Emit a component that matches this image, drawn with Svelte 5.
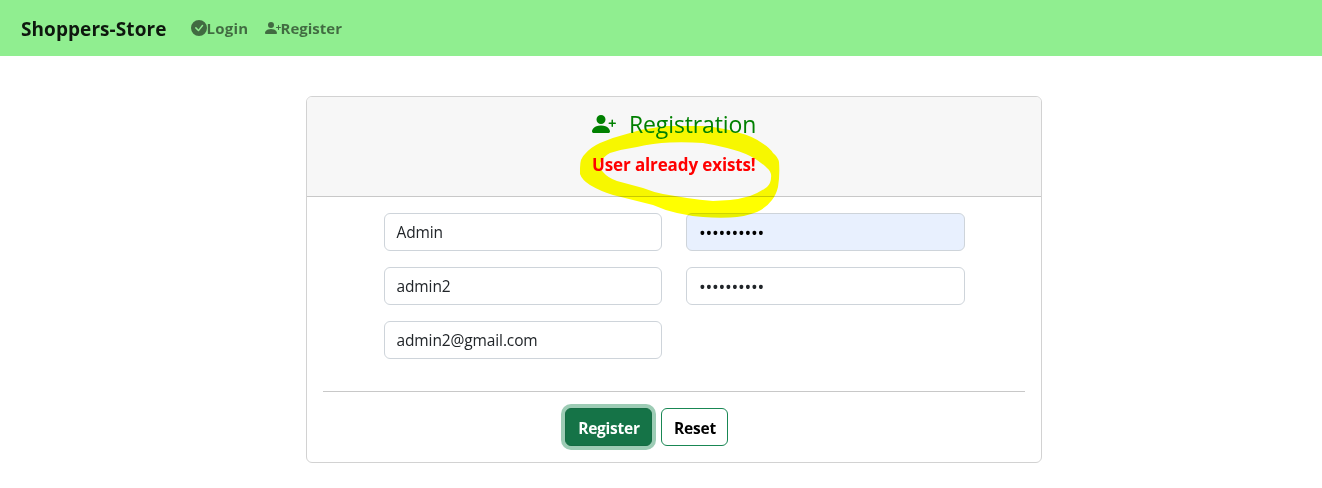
<script>
  const names = ['Admin', 'admin2', 'admin2@gmail.com'];
</script>

{#snippet personPlus(size)}
  <svg width={size} height={size} viewBox="0 0 16 16" fill="currentColor" aria-hidden="true">
    <path d="M1 14s-1 0-1-1 1-4 6-4 6 3 6 4-1 1-1 1H1zm5-6a3 3 0 1 0 0-6 3 3 0 0 0 0 6z" />
    <path fill-rule="evenodd" d="M13.5 5a.5.5 0 0 1 .5.5V7h1.5a.5.5 0 0 1 0 1H14v1.5a.5.5 0 0 1-1 0V8h-1.5a.5.5 0 0 1 0-1H13V5.5a.5.5 0 0 1 .5-.5z" />
  </svg>
{/snippet}

<nav>
  <span class="brand">Shoppers-Store</span>
  <span class="link login">
    <svg width="16" height="16" viewBox="0 0 16 16" fill="currentColor" aria-hidden="true">
      <path d="M16 8A8 8 0 1 1 0 8a8 8 0 0 1 16 0zm-3.97-3.03a.75.75 0 0 0-1.08.022L7.477 9.417 5.384 7.323a.75.75 0 0 0-1.06 1.06L6.97 11.03a.75.75 0 0 0 1.079-.02l3.992-4.99a.75.75 0 0 0-.01-1.05z" />
    </svg><span>Login</span>
  </span>
  <span class="link">{@render personPlus(16)}<span>Register</span></span>
</nav>

<main>
  <header>
    <h3>{@render personPlus(24)}<span>Registration</span></h3>
    <p class="error">User already exists!</p>
  </header>
  <section>
    <div class="fields">
      <div class="column">
        {#each names as value}
          <div class="field">{value}</div>
        {/each}
      </div>
      <div class="column">
        <div class="field dots filled">••••••••••</div>
        <div class="field dots">••••••••••</div>
      </div>
    </div>
    <hr />
    <div class="actions">
      <button class="primary">Register</button>
      <button class="outline">Reset</button>
    </div>
  </section>
  <svg class="marker" width="200" height="92" viewBox="580 126 200 92" aria-hidden="true">
    <path fill="#ff0" fill-rule="evenodd" d="M580 168Q580 158 585 154Q591 147 600 143Q614 137 630 133Q641 129 653 128Q667 125 680 126Q697 125 713 127Q728 129 740 133Q752 136 762 143Q770 148 773 153Q778 157 779 162Q780 175 778 187Q776 195 772 200Q766 208 757 212Q744 217 730 217.500Q716 218 703 217Q690 216 677 213Q664 210 653 205L613 195Q600 191 590 185Q582 180 580 174ZM600 163Q604 156 610 153Q623 149 637 147Q653 143 670 142.500Q687 142 703 143Q716 145 727 148Q740 151 750 156Q760 161 767 168Q772 172 771 178Q771 183 767 187Q759 193 750 196Q740 199 730 200L713 201Q700 200 687 198L663 194Q653 192 643 188L617 181Q608 178 603 172Q599 168 600 163Z" />
  </svg>
</main>

<style>
  :global(body) {
    background: #fff;
    color: #212529;
    font: 16px/24px "Open Sans", "Noto Sans", sans-serif;
  }
  nav {
    display: flex;
    align-items: center;
    box-sizing: border-box;
    height: 56px;
    padding: 1px 21px 0;
    background: #90ee90;
    font-weight: 700;
    white-space: nowrap;
  }
  .brand {
    width: 169.5px;
    font-size: 19px;
    letter-spacing: 0.07px;
    color: rgba(0, 0, 0, 0.9);
  }
  .link {
    display: flex;
    align-items: center;
    padding-bottom: 2px;
    font-size: 15px;
    letter-spacing: 0;
    color: rgba(0, 0, 0, 0.55);
  }
  .login {
    width: 74px;
    letter-spacing: 0.25px;
  }
  main {
    position: relative;
    box-sizing: border-box;
    width: 736px;
    height: 367px;
    margin: 40px 0 0 306px;
    border: 1px solid #d2d2d2;
    border-radius: 6px;
  }
  header {
    box-sizing: border-box;
    height: 100px;
    padding-top: 10px;
    background: #f7f7f7;
    border-bottom: 1px solid #c8c8c8;
    border-radius: 5px 5px 0 0;
  }
  h3 {
    display: flex;
    align-items: center;
    height: 34px;
    margin: 0 0 0 285px;
    gap: 13px;
    font-size: 23px;
    font-weight: 400;
    color: green;
    letter-spacing: -0.12px;
  }
  .error {
    margin: 12px 0 0 285px;
    font-size: 17px;
    font-weight: 700;
    letter-spacing: -0.12px;
    color: red;
  }
  section { padding: 16px; }
  .fields {
    display: grid;
    grid-template-columns: 278px 279px;
    column-gap: 24px;
    padding-left: 61px;
    height: 178px;
  }
  .column {
    display: flex;
    flex-direction: column;
    gap: 16px;
  }
  .field {
    box-sizing: border-box;
    height: 38px;
    padding: 6px 11.5px;
    border: 1px solid #ced4da;
    border-radius: 6px;
    font-size: 15.5px;
    letter-spacing: -0.12px;
  }
  .filled {
    background: #e8f0fe;
    color: #000;
  }
  .dots {
    padding: 7px 12px 5px;
    font-size: 18px;
    letter-spacing: -0.28px;
  }
  hr {
    height: 1px;
    margin: 0 0 16px;
    border: 0;
    background: #c8c8c8;
  }
  .actions {
    display: flex;
    gap: 9px;
    padding-left: 242px;
  }
  button {
    height: 38px;
    padding: 1px 0 0 1px;
    border: 1px solid #198754;
    border-radius: 6px;
    font: 700 15.5px/24px "Open Sans", "Noto Sans", sans-serif;
    letter-spacing: -0.22px;
  }
  .primary {
    width: 87px;
    background: #157347;
    border-color: #146c43;
    color: #fff;
    box-shadow: 0 0 0 4px #9dccb5;
  }
  .outline {
    width: 67px;
    background: #fff;
    color: #000;
  }
  .marker {
    position: absolute;
    left: 273px;
    top: 29px;
    mix-blend-mode: multiply;
  }
</style>
